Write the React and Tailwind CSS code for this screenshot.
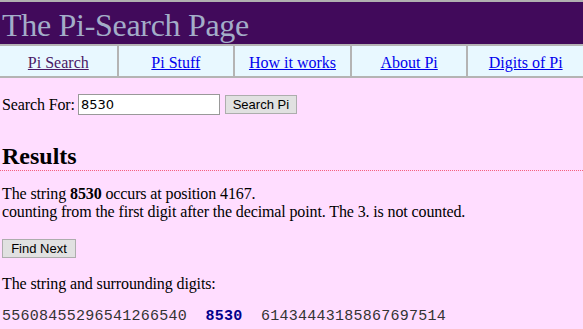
export default function App() {
  const navItems = ["Pi Search", "Pi Stuff", "How it works", "About Pi", "Digits of Pi"];
  return (
    <div className="min-h-screen bg-[#ffddff] font-['Liberation_Serif','Times_New_Roman',serif] text-black">
      <div className="border-t-2 border-[#b0b0b0] bg-[#410a5b] h-[44px] pt-[5px] pl-[2px]">
        <h1 className="text-[32px] leading-[36px] text-[#a3adc8] font-normal tracking-[-0.3px]">The Pi-Search Page</h1>
      </div>
      <div className="grid grid-cols-5 bg-[#e8f8ff] border-y-2 border-[#b4b4b4] h-[34px]">
        {navItems.map((t, i) => (
          <div
            key={t}
            className={
              "flex items-center justify-center pt-[3px] text-[16px] leading-[18px] " +
              (i > 0 ? "border-l-2 border-[#b4b4b4]" : "")
            }
          >
            <a
              href="#"
              className={"underline " + (i === 0 ? "text-[#4a1866]" : "text-[#0000ee]")}
            >
              {t}
            </a>
          </div>
        ))}
      </div>

      <div className="mt-4 pl-[2px] flex items-center h-[21px]">
        <span className="text-[16px] leading-[18px] tracking-[-0.12px]">Search For:</span>
        <input
          readOnly
          value="8530"
          className="ml-[3px] w-[142px] h-[21px] bg-white border border-[#999] px-[2px] text-[13px] font-['DejaVu_Sans',sans-serif] text-black outline-none"
        />
        <button className="ml-[5px] w-[72px] h-[19px] bg-[#e1e1e1] border border-[#adadad] text-[13px] leading-[17px] font-['Liberation_Sans',Arial,sans-serif] text-black">
          Search Pi
        </button>
      </div>

      <h2 className="mt-[27px] pl-[2px] text-[24px] leading-[28px] font-bold border-b border-dotted border-[#f4607f]">
        Results
      </h2>

      <p className="mt-[14px] pl-[2px] text-[16px] leading-[18px] tracking-[-0.12px]">
        The string <b>8530</b> occurs at position 4167.
        <br />
        counting from the first digit after the decimal point. The 3. is not counted.
      </p>

      <button className="mt-[18px] ml-[2px] w-[74px] h-[19px] bg-[#e1e1e1] border border-[#adadad] text-[13px] leading-[17px] font-['Liberation_Sans',Arial,sans-serif] text-black">
        Find Next
      </button>

      <p className="mt-[15px] pl-[2px] text-[16px] leading-[18px] tracking-[-0.12px]">The string and surrounding digits:</p>

      <p className="mt-[15px] pl-[2px] text-[15px] leading-[18px] font-['Liberation_Mono','Courier_New',monospace] text-[#333] whitespace-pre tracking-[0.25px]">
        {"55608455296541266540  "}
        <b className="text-[#00008b]">8530</b>
        {"  61434443185867697514"}
      </p>
    </div>
  );
}
